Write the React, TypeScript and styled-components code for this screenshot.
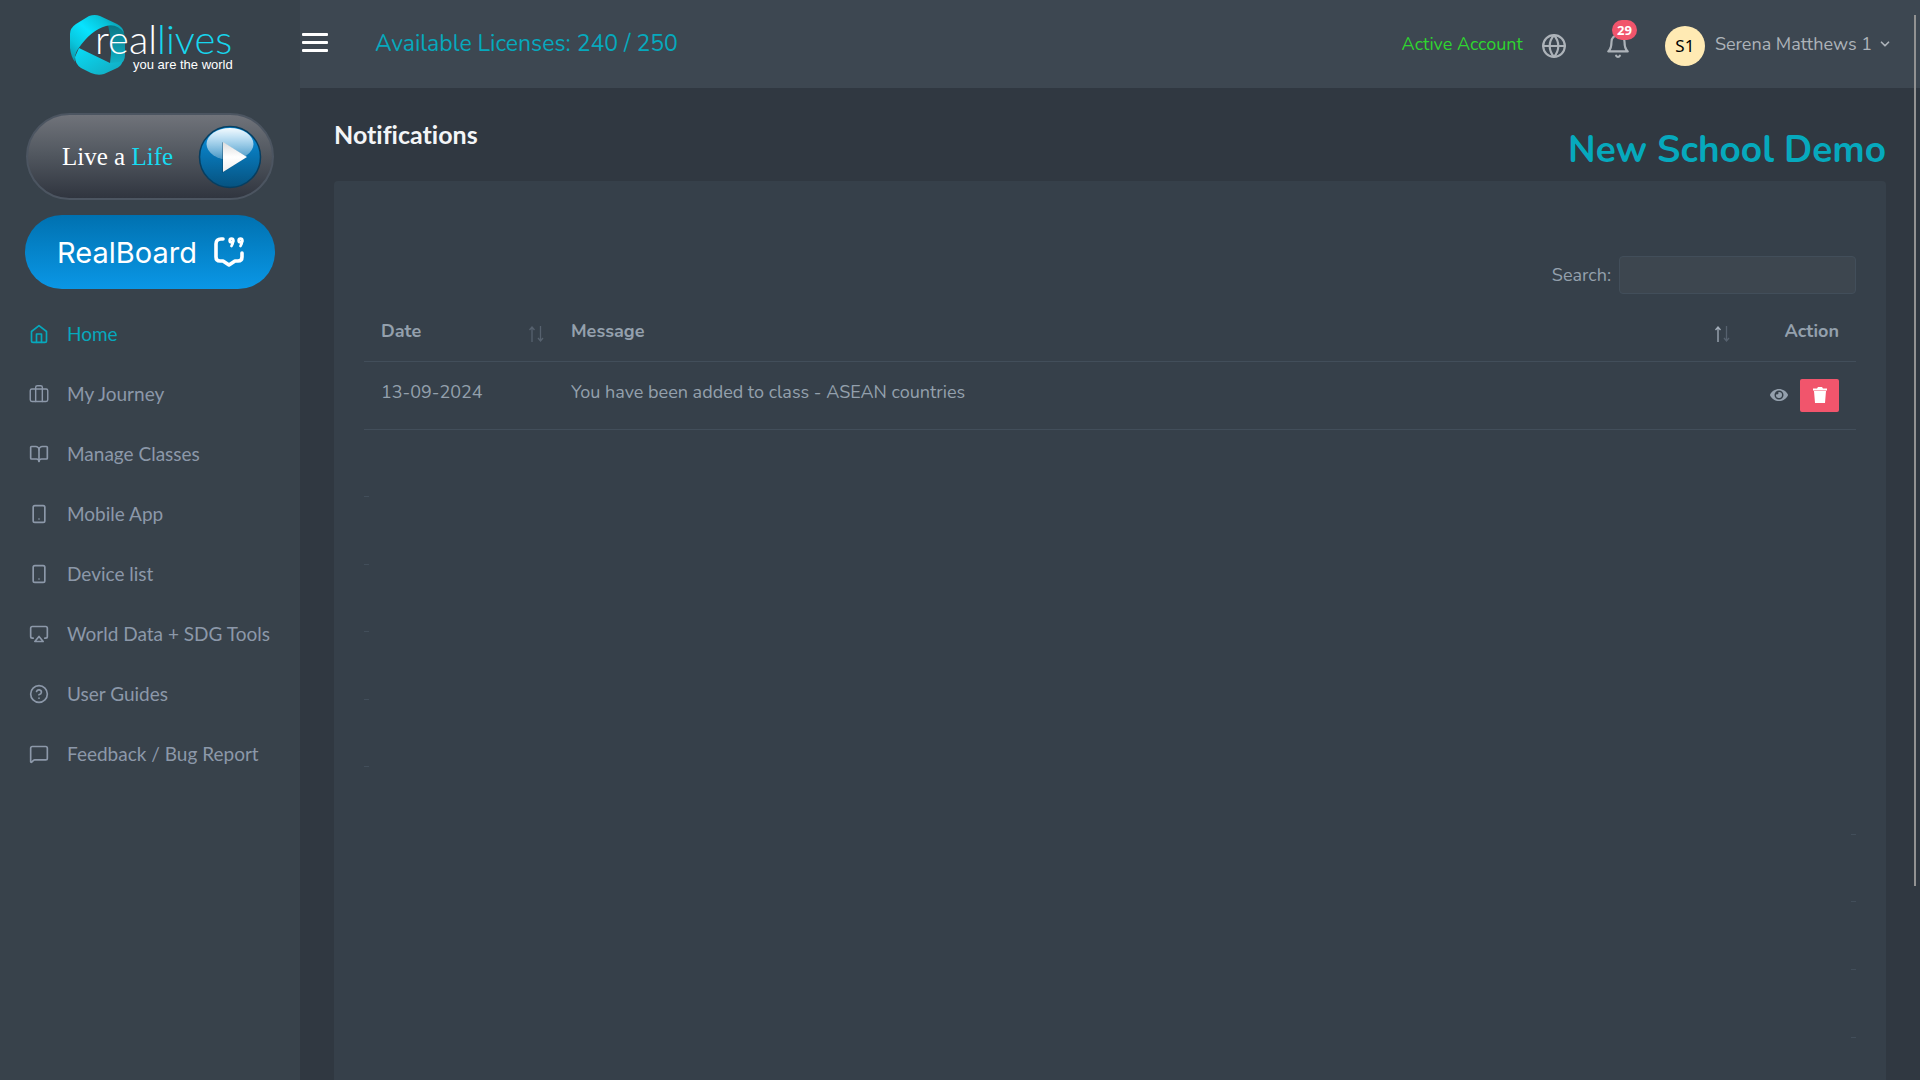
import React, { useState } from "react";
import styled, { createGlobalStyle } from "styled-components";
import {
  Airplay,
  BookOpen,
  ChevronDown,
  MessageSquare,
} from "lucide-react";
import { FiBell, FiGlobe, FiHelpCircle, FiSmartphone } from "react-icons/fi";
import { FaEye } from "react-icons/fa";

const ui = '"Noto Sans", "Liberation Sans", sans-serif';
const nunito = 'Nunito, "Noto Sans", "Liberation Sans", sans-serif';
const grotesk = '"Cerebri Sans", "HK Grotesk", Lato, "Liberation Sans", sans-serif';

const colors = {
  sidebar: "#38424b",
  header: "#3d4751",
  page: "#303841",
  card: "#36404a",
  line: "#424e5a",
  text: "#94a0ad",
  menu: "#8c98a9",
  accent: "#06a9bd",
  danger: "#f1556c",
};

const GlobalStyle = createGlobalStyle`
  * { box-sizing: border-box; }
  body {
    margin: 0;
    background: ${colors.page};
    color: ${colors.text};
    font-family: ${nunito};
    font-size: 18px;
    line-height: 24px;
    overflow: hidden;
  }
  a { color: inherit; text-decoration: none; }
  button { font: inherit; color: inherit; border: 0; background: none; padding: 0; cursor: pointer; }
`;

const Shell = styled.div`
  display: flex;
  height: 100vh;
  overflow: hidden;
`;

const Sidebar = styled.aside`
  flex: 0 0 300px;
  display: flex;
  flex-direction: column;
  align-items: center;
  background: ${colors.sidebar};
`;

const LogoLink = styled.a`
  display: flex;
  justify-content: center;
  width: 100%;
  height: 113px;
  padding-top: 8px;
  svg { display: block; margin-left: 2px; }
`;

const LiveButton = styled.button`
  display: flex;
  align-items: center;
  justify-content: space-between;
  width: 248px;
  height: 87px;
  padding: 0 10px 0 34px;
  border: 2px solid #4c5561;
  border-radius: 44px;
  background: linear-gradient(#70737a, #535961 45%, #30353f);
  color: #fff;
  font-family: "Liberation Serif", serif;
  font-size: 25px;
  line-height: 32px;
  em { color: #17dbf2; font-style: normal; }
`;

const BoardButton = styled.button`
  display: flex;
  align-items: center;
  justify-content: center;
  gap: 16px;
  width: 250px;
  height: 74px;
  margin-top: 15px;
  padding: 2px 0 0 2px;
  border-radius: 37px;
  background: linear-gradient(#0071b0, #0a97e6);
  color: #fff;
  font-family: Inter, sans-serif;
  font-size: 29px;
  line-height: 40px;
  svg { margin-bottom: 2px; }
`;

const Menu = styled.nav`
  display: flex;
  flex-direction: column;
  align-self: stretch;
  margin-top: 15px;
`;

const MenuLink = styled.a<{ $active?: boolean }>`
  display: flex;
  align-items: center;
  gap: 18px;
  height: 60px;
  padding-left: 29px;
  color: ${(p) => (p.$active ? colors.accent : colors.menu)};
  font-family: ${grotesk};
  font-size: 19px;
  font-variant-ligatures: none;
  line-height: 24px;
  white-space: nowrap;
  svg { flex: none; }
`;

const Main = styled.main`
  flex: 1;
  min-width: 0;
  display: flex;
  flex-direction: column;
`;

const Header = styled.header`
  flex: 0 0 88px;
  display: flex;
  align-items: center;
  padding: 0 28px 0 2px;
  background: ${colors.header};
`;

const Burger = styled.button`
  display: flex;
  flex-direction: column;
  gap: 5px;
  width: 26px;
  margin-right: 47px;
  padding-bottom: 4px;
  span { height: 3px; border-radius: 1px; background: #fff; }
`;

const Licenses = styled.div`
  flex: 1;
  color: ${colors.accent};
  font-size: 23px;
  line-height: 32px;
`;

const Account = styled.span`
  color: #2fd62f;
  margin-right: 18px;
`;

const IconButton = styled.button`
  position: relative;
  display: flex;
  margin-top: 4px;
  color: #adb3b9;
`;

const BellButton = styled(IconButton)`
  margin-left: 38px;
`;

const Badge = styled.span`
  position: absolute;
  top: -13px;
  right: -6px;
  padding: 0 5px;
  border-radius: 10px;
  background: ${colors.danger};
  color: #fff;
  font-family: ${ui};
  font-size: 13px;
  font-weight: 700;
  line-height: 20px;
`;

const UserButton = styled.button`
  display: flex;
  align-items: center;
  gap: 10px;
  margin-left: 34px;
  color: #adb3b9;
`;

const Avatar = styled.span`
  width: 40px;
  height: 40px;
  margin-top: 4px;
  border-radius: 50%;
  background: #ffeab3;
  color: #000;
  font-family: ${ui};
  font-size: 17px;
  line-height: 40px;
  text-align: center;
`;

const UserName = styled.span`
  display: flex;
  align-items: center;
  gap: 6px;
`;

const Content = styled.div`
  flex: 1;
  min-height: 0;
  display: flex;
  flex-direction: column;
  padding: 0 34px;
`;

const TitleBar = styled.div`
  flex: 0 0 93px;
  display: flex;
  justify-content: space-between;
  align-items: flex-start;
`;

const Title = styled.h1`
  margin: 30px 0 0;
  color: #f3f5f7;
  font-family: ${grotesk};
  font-size: 25px;
  font-variant-ligatures: none;
  font-weight: 700;
  line-height: 32px;
`;

const School = styled.h2`
  margin: 38px 0 0;
  color: ${colors.accent};
  font-size: 37px;
  font-weight: 700;
  line-height: 48px;
`;

const Card = styled.section`
  flex: 1;
  min-height: 0;
  padding: 75px 30px 0;
  border-radius: 4px 4px 0 0;
  background: ${colors.card};
  overflow: hidden;
`;

const Search = styled.label`
  display: flex;
  align-items: center;
  justify-content: flex-end;
  gap: 8px;
`;

const SearchInput = styled.input`
  width: 237px;
  height: 38px;
  padding: 4px 12px;
  border: 1px solid ${colors.line};
  border-radius: 4px;
  background: #3d464f;
  color: ${colors.text};
  font: inherit;
  outline: 0;
`;

const Table = styled.table`
  width: 100%;
  margin-top: 8px;
  border-collapse: collapse;
  table-layout: fixed;
`;

const Cell = styled.td`
  height: 68px;
  padding: 18px 17px 0;
  border-bottom: 1px solid ${colors.line};
  vertical-align: top;
`;

const HeadCell = styled.th<{ $width?: number; $right?: boolean }>`
  width: ${(p) => (p.$width ? `${p.$width}px` : "auto")};
  height: 59px;
  padding: 17px 17px 0;
  border-bottom: 1px solid ${colors.line};
  font-weight: 700;
  text-align: ${(p) => (p.$right ? "right" : "left")};
  vertical-align: top;
`;

const SortButton = styled.button`
  display: flex;
  justify-content: space-between;
  width: 100%;
  svg { flex: none; margin: 7px -8px 0 0; }
`;

const Actions = styled.div`
  display: flex;
  align-items: center;
  justify-content: flex-end;
  gap: 12px;
`;

const EyeButton = styled.button`
  display: flex;
`;

const DeleteButton = styled.button`
  display: flex;
  align-items: center;
  justify-content: center;
  width: 39px;
  height: 33px;
  border-radius: 2px;
  background: ${colors.danger};
  color: #fff;
`;

const ActionCell = styled(Cell)`
  padding-top: 17px;
`;

const EmptyRows = styled.div`
  display: grid;
  grid-auto-rows: 1fr;
  height: 608px;
`;

const EmptyRow = styled.span<{ $end: boolean }>`
  width: 5px;
  justify-self: ${(p) => (p.$end ? "end" : "start")};
  border-bottom: 1px solid ${colors.line};
`;

const ScrollThumb = styled.div`
  position: fixed;
  top: 15px;
  right: 4px;
  bottom: 18%;
  width: 2px;
  background: #929292;
`;

function Logo() {
  return (
    <svg width="174" height="74" viewBox="0 0 174 74" role="img" aria-label="reallives">
      <defs>
        <linearGradient id="lgA" x1="0" y1="1" x2="1" y2="0">
          <stop offset="0" stopColor="#0a8fa2" />
          <stop offset=".25" stopColor="#09c6dd" />
          <stop offset=".5" stopColor="#07e3ff" />
          <stop offset=".75" stopColor="#08c0d6" />
          <stop offset="1" stopColor="#0b7785" />
        </linearGradient>
        <linearGradient id="lgB" x1="0" y1="0" x2="1" y2="1">
          <stop offset="0" stopColor="#09dcf7" />
          <stop offset="1" stopColor="#13a8bd" />
        </linearGradient>
        <linearGradient id="lgC" x1="0" y1="0" x2="0" y2="1">
          <stop offset="0" stopColor="#0a7583" />
          <stop offset="1" stopColor="#12b4c9" />
        </linearGradient>
      </defs>
      <path d="M44 17C52 15 60 20 61 29L61 47Q61 54 55 57L46 55Q49 36 44 17Z" fill="url(#lgC)" />
      <path d="M15 40L46 55L58 54Q58 58 51 61L40 66Q34 68 27 65L17 60Q11 56 11 49Z" fill="url(#lgB)" />
      <path d="M6 26Q6 20 12 16L25 8Q31 6 36 8L53 16Q59 19 60 25Q53 15 42 18Q27 22 14 41Q10 47 11 54Q7 49 6 40Z" fill="url(#lgA)" />
      <text x="31" y="46" fill="#fff" fontFamily="Lato" fontWeight="300" fontSize="40">
        real<tspan fill="#17d6ee">lives</tspan>
      </text>
      <text x="69" y="61" fill="#fff" fontFamily="Liberation Sans" fontSize="13">
        you are the world
      </text>
    </svg>
  );
}

function PlayOrb() {
  return (
    <svg width="64" height="64" viewBox="0 0 64 64" aria-hidden="true">
      <defs>
        <linearGradient id="orb" x1="0" y1="0" x2="0" y2="1">
          <stop offset="0" stopColor="#0a93e2" />
          <stop offset="1" stopColor="#06527f" />
        </linearGradient>
        <linearGradient id="gloss" x1="0" y1="0" x2="0" y2="1">
          <stop offset="0" stopColor="#fff" stopOpacity=".95" />
          <stop offset="1" stopColor="#fff" stopOpacity=".25" />
        </linearGradient>
        <linearGradient id="tri" x1="0" y1="0" x2="0" y2="1">
          <stop offset="0" stopColor="#ddd" />
          <stop offset=".5" stopColor="#fff" />
          <stop offset="1" stopColor="#eee" />
        </linearGradient>
      </defs>
      <circle cx="32" cy="32" r="30.5" fill="url(#orb)" stroke="#073e60" strokeWidth="1.5" />
      <ellipse cx="32" cy="19" rx="23.5" ry="16" fill="url(#gloss)" />
      <path d="M24 17L49 32L24 48Z" fill="#04395a" opacity=".4" />
      <path d="M25 17L49 32L25 47Z" fill="url(#tri)" />
    </svg>
  );
}

function QuoteIcon() {
  return (
    <svg width="32" height="32" viewBox="0 0 32 32" fill="none" stroke="#fff" strokeWidth="3.600" strokeLinecap="round" strokeLinejoin="round" aria-hidden="true">
      <path d="M10 3H8Q3 3 3 8V21Q3 25 7 25H10L16 29L22 25H25Q29 25 29 21V17" />
      <circle cx="18.500" cy="4.500" r="1.400" />
      <circle cx="27.500" cy="4.500" r="1.400" />
      <path d="M20 5Q20 8 18.500 10M29 5Q29 8 27.500 10" strokeWidth="2.800" />
    </svg>
  );
}

function HomeIcon() {
  return (
    <svg width="20" height="20" viewBox="0 0 24 24" fill="none" stroke="currentColor" strokeWidth="2" strokeLinecap="round" strokeLinejoin="round">
      <path d="M3 9l9-7 9 7v11a2 2 0 0 1-2 2H5a2 2 0 0 1-2-2z" />
      <path d="M9 22V12h6v10" />
    </svg>
  );
}

function CaseIcon() {
  return (
    <svg width="20" height="20" viewBox="0 0 24 24" fill="none" stroke="currentColor" strokeWidth="1.700" strokeLinecap="round" strokeLinejoin="round">
      <rect x="1.500" y="6" width="21" height="15" rx="2" />
      <path d="M8 21V4a2 2 0 0 1 2-2h4a2 2 0 0 1 2 2v17" />
    </svg>
  );
}

function SortArrows({ up }: { up?: boolean }) {
  return (
    <svg width="17" height="16" viewBox="0 0 17 16" fill="none" aria-hidden="true">
      <path d="M4 16V2M1.500 4L4 1L6.500 4" stroke={up ? "#a3adb9" : "#56616e"} strokeWidth="1.300" />
      <path d="M12.500 0V14M10 12L12.500 15L15 12" stroke="#56616e" strokeWidth="1.300" />
    </svg>
  );
}

function TrashIcon() {
  return (
    <svg width="14" height="16" viewBox="0 0 14 16" fill="currentColor" aria-hidden="true">
      <path d="M0 1.500H4L5 0H9L10 1.500H14V3.500H0ZM1 4H13L12 16H2Z" />
    </svg>
  );
}

const menu = [
  { label: "Home", icon: <HomeIcon />, active: true },
  { label: "My Journey", icon: <CaseIcon /> },
  { label: "Manage Classes", icon: <BookOpen size={20} /> },
  { label: "Mobile App", icon: <FiSmartphone size={20} /> },
  { label: "Device list", icon: <FiSmartphone size={20} /> },
  { label: "World Data + SDG Tools", icon: <Airplay size={20} /> },
  { label: "User Guides", icon: <FiHelpCircle size={20} /> },
  { label: "Feedback / Bug Report", icon: <MessageSquare size={20} /> },
];

const emptyRows = [false, false, false, false, false, true, true, true, true];

export default function App() {
  const [query, setQuery] = useState("");
  return (
    <>
      <GlobalStyle />
      <Shell>
        <Sidebar>
          <LogoLink href="#home"><Logo /></LogoLink>
          <LiveButton type="button">
            <span>Live a <em>Life</em></span>
            <PlayOrb />
          </LiveButton>
          <BoardButton type="button">RealBoard <QuoteIcon /></BoardButton>
          <Menu>
            {menu.map((m) => (
              <MenuLink key={m.label} href="#menu" $active={m.active}>
                {m.icon}
                {m.label}
              </MenuLink>
            ))}
          </Menu>
        </Sidebar>
        <Main>
          <Header>
            <Burger type="button" aria-label="Toggle menu"><span /><span /><span /></Burger>
            <Licenses>Available Licenses: 240 / 250</Licenses>
            <Account>Active Account</Account>
            <IconButton type="button" aria-label="Language"><FiGlobe size={26} /></IconButton>
            <BellButton type="button" aria-label="Notifications">
              <FiBell size={26} />
              <Badge>29</Badge>
            </BellButton>
            <UserButton type="button">
              <Avatar>S1</Avatar>
              <UserName>Serena Matthews 1 <ChevronDown size={14} strokeWidth={3} /></UserName>
            </UserButton>
          </Header>
          <Content>
            <TitleBar>
              <Title>Notifications</Title>
              <School>New School Demo</School>
            </TitleBar>
            <Card>
              <Search>
                Search:
                <SearchInput type="search" value={query} onChange={(e) => setQuery(e.target.value)} />
              </Search>
              <Table>
                <thead>
                  <tr>
                    <HeadCell $width={190}><SortButton type="button">Date <SortArrows /></SortButton></HeadCell>
                    <HeadCell><SortButton type="button">Message <SortArrows up /></SortButton></HeadCell>
                    <HeadCell $width={116} $right>Action</HeadCell>
                  </tr>
                </thead>
                <tbody>
                  <tr>
                    <Cell>13-09-2024</Cell>
                    <Cell>You have been added to class - ASEAN countries</Cell>
                    <ActionCell>
                      <Actions>
                        <EyeButton type="button" aria-label="View"><FaEye size={18} /></EyeButton>
                        <DeleteButton type="button" aria-label="Delete"><TrashIcon /></DeleteButton>
                      </Actions>
                    </ActionCell>
                  </tr>
                </tbody>
              </Table>
              <EmptyRows>
                {emptyRows.map((end, i) => <EmptyRow key={i} $end={end} />)}
              </EmptyRows>
            </Card>
          </Content>
        </Main>
        <ScrollThumb />
      </Shell>
    </>
  );
}
